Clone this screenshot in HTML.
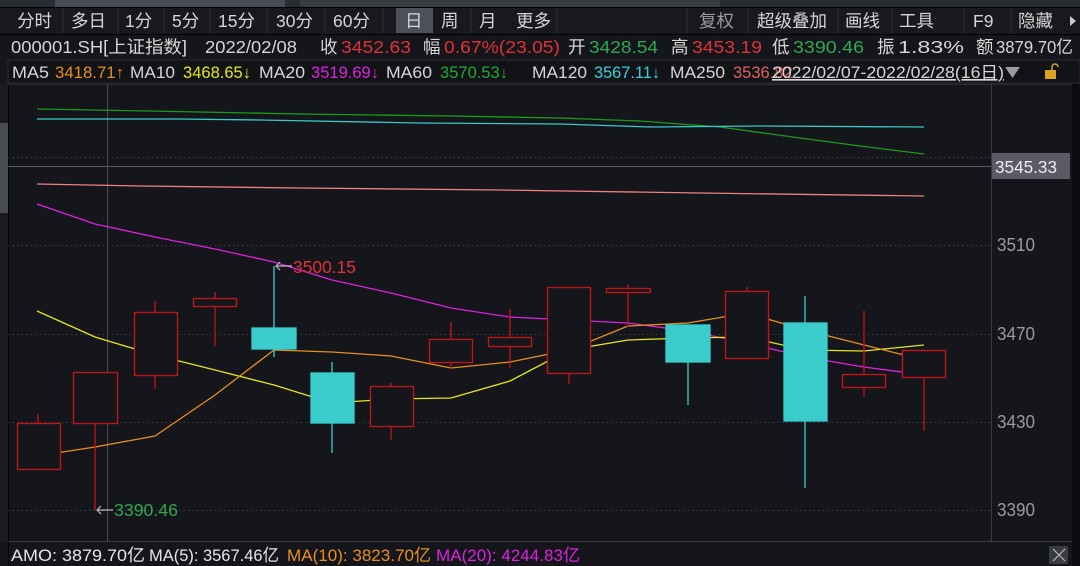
<!DOCTYPE html>
<html><head><meta charset="utf-8"><style>
*{margin:0;padding:0;box-sizing:border-box}
body{width:1080px;height:566px;background:#14161b;overflow:hidden;position:relative;font-family:"Liberation Sans","Noto Sans CJK SC",sans-serif;color:#d0d0d0}
</style></head><body>
<svg width="1080" height="566" style="position:absolute;left:0;top:0" font-family="Liberation Sans, Noto Sans CJK SC, sans-serif">
<rect x="0" y="0" width="1080" height="7" fill="#2a2c33"/>
<rect x="55" y="0" width="230" height="7" fill="#4a4c55"/>
<rect x="300" y="0" width="420" height="7" fill="#3a3c44"/>
<rect x="0" y="7" width="1080" height="27" fill="#17191e"/>
<line x1="0" y1="7.5" x2="1080" y2="7.5" stroke="#000"/>
<rect x="396" y="8" width="37" height="25" fill="#4e5059"/>
<g stroke="#2c2e35">
<line x1="63" y1="8" x2="63" y2="33"/><line x1="118" y1="8" x2="118" y2="33"/><line x1="164" y1="8" x2="164" y2="33"/><line x1="210" y1="8" x2="210" y2="33"/><line x1="267" y1="8" x2="267" y2="33"/><line x1="325" y1="8" x2="325" y2="33"/><line x1="383" y1="8" x2="383" y2="33"/><line x1="471" y1="8" x2="471" y2="33"/><line x1="557" y1="8" x2="557" y2="33"/><line x1="687" y1="8" x2="687" y2="33"/><line x1="748" y1="8" x2="748" y2="33"/><line x1="838" y1="8" x2="838" y2="33"/><line x1="892" y1="8" x2="892" y2="33"/><line x1="964" y1="8" x2="964" y2="33"/><line x1="1011" y1="8" x2="1011" y2="33"/>
</g>
<g font-size="17.5" fill="#d6d6d6">
<text x="17" y="27">分时</text><text x="71" y="27">多日</text><text x="125" y="27">1分</text><text x="172" y="27">5分</text><text x="218" y="27">15分</text><text x="276" y="27">30分</text><text x="333" y="27">60分</text><text x="405" y="27">日</text><text x="441" y="27">周</text><text x="479" y="27">月</text><text x="516" y="27">更多</text>
<text x="699" y="27" fill="#9a9a9a">复权</text><text x="757" y="27">超级叠加</text><text x="845" y="27">画线</text><text x="899" y="27">工具</text><text x="973" y="27">F9</text><text x="1018" y="27">隐藏</text>
</g>
<path d="M1070 16 L1076 21 L1070 26Z" fill="#ccc"/>
<line x1="0" y1="34.5" x2="1080" y2="34.5" stroke="#000"/>
<g font-size="17.5">
<text x="11" y="53" fill="#d6d6d6" textLength="176" lengthAdjust="spacingAndGlyphs">000001.SH[上证指数]</text>
<text x="205" y="53" fill="#d6d6d6" textLength="92" lengthAdjust="spacingAndGlyphs">2022/02/08</text>
<text x="320" y="53" fill="#d6d6d6">收</text><text x="341" y="53" fill="#e03236" textLength="70" lengthAdjust="spacingAndGlyphs">3452.63</text>
<text x="423" y="53" fill="#d6d6d6">幅</text><text x="444" y="53" fill="#e03236" textLength="116" lengthAdjust="spacingAndGlyphs">0.67%(23.05)</text>
<text x="568" y="53" fill="#d6d6d6">开</text><text x="589" y="53" fill="#2fa84f" textLength="69" lengthAdjust="spacingAndGlyphs">3428.54</text>
<text x="671" y="53" fill="#d6d6d6">高</text><text x="692" y="53" fill="#e03236" textLength="70" lengthAdjust="spacingAndGlyphs">3453.19</text>
<text x="772" y="53" fill="#d6d6d6">低</text><text x="793" y="53" fill="#2fa84f" textLength="71" lengthAdjust="spacingAndGlyphs">3390.46</text>
<text x="877" y="53" fill="#d6d6d6">振</text><text x="898" y="53" fill="#d6d6d6" textLength="66" lengthAdjust="spacingAndGlyphs">1.83%</text>
<text x="976" y="53" fill="#d6d6d6">额</text><text x="996" y="53" fill="#d6d6d6" textLength="77" lengthAdjust="spacingAndGlyphs">3879.70亿</text>
</g>
<rect x="8" y="60" width="1072" height="23" fill="#111317" stroke="#2c2e35"/>
<g font-size="16.5">
<text x="12" y="78" fill="#d6d6d6" textLength="37" lengthAdjust="spacingAndGlyphs">MA5</text><text x="55" y="78" fill="#e8901a" textLength="69" lengthAdjust="spacingAndGlyphs">3418.71↑</text>
<text x="130" y="78" fill="#d6d6d6" textLength="45" lengthAdjust="spacingAndGlyphs">MA10</text><text x="183" y="78" fill="#e6e61a" textLength="68" lengthAdjust="spacingAndGlyphs">3468.65↓</text>
<text x="259" y="78" fill="#d6d6d6" textLength="46" lengthAdjust="spacingAndGlyphs">MA20</text><text x="311" y="78" fill="#e020e0" textLength="68" lengthAdjust="spacingAndGlyphs">3519.69↓</text>
<text x="386" y="78" fill="#d6d6d6" textLength="46" lengthAdjust="spacingAndGlyphs">MA60</text><text x="440" y="78" fill="#22a832" textLength="68" lengthAdjust="spacingAndGlyphs">3570.53↓</text>
<text x="532" y="78" fill="#d6d6d6" textLength="55" lengthAdjust="spacingAndGlyphs">MA120</text><text x="594" y="78" fill="#3ad0d8" textLength="66" lengthAdjust="spacingAndGlyphs">3567.11↓</text>
<text x="670" y="78" fill="#d6d6d6" textLength="55" lengthAdjust="spacingAndGlyphs">MA250</text><text x="733" y="78" fill="#e06060">3536.82</text>
<text x="772" y="78" fill="#d6d6d6" text-decoration="underline" textLength="232" lengthAdjust="spacingAndGlyphs">2022/02/07-2022/02/28(16日)</text>
</g>
<path d="M1005 67 L1020 67 L1012.5 78Z" fill="#9a9a9a"/>
<rect x="1045" y="70" width="11" height="9" fill="#d9a520"/>
<path d="M1052 70 v-3 a3 3 0 0 1 6 0" stroke="#d9a520" stroke-width="1.5" fill="none"/>
<rect x="0" y="84" width="8" height="457" fill="#1a1c21"/>
<rect x="0" y="123" width="8" height="90" fill="#4a4c55"/>
<line x1="8.5" y1="84" x2="8.5" y2="566" stroke="#000"/>
<line x1="8" y1="84.5" x2="1072" y2="84.5" stroke="#2c2e35"/>
<line x1="991.5" y1="84" x2="991.5" y2="541" stroke="#3a3c44"/>
<line x1="8" y1="541.5" x2="1072" y2="541.5" stroke="#3a3c44"/>
<rect x="1072" y="84" width="8" height="482" fill="#0c0d10"/>
<g stroke="#3a3c44" stroke-dasharray="1.5,3">
<line x1="8" y1="157.5" x2="991" y2="157.5"/><line x1="8" y1="245.5" x2="991" y2="245.5"/><line x1="8" y1="334.5" x2="991" y2="334.5"/><line x1="8" y1="422.5" x2="991" y2="422.5"/><line x1="8" y1="510.5" x2="991" y2="510.5"/>
</g>
<g font-size="18" fill="#9a9a9a">
<text x="997" y="251" textLength="38" lengthAdjust="spacingAndGlyphs">3510</text><text x="997" y="340" textLength="38" lengthAdjust="spacingAndGlyphs">3470</text><text x="997" y="428" textLength="38" lengthAdjust="spacingAndGlyphs">3430</text><text x="997" y="516" textLength="38" lengthAdjust="spacingAndGlyphs">3390</text>
</g>
<line x1="8" y1="166.5" x2="991" y2="166.5" stroke="#5a5a60"/>
<line x1="107.5" y1="84" x2="107.5" y2="541" stroke="#4a4a50"/>
<rect x="992" y="153" width="78" height="26" fill="#5a5b66"/>
<text x="995" y="173" font-size="17.5" fill="#ececec" textLength="62" lengthAdjust="spacingAndGlyphs">3545.33</text>
<g fill="none" stroke-width="1.3">
<polyline stroke="#1c9a1c" points="37,109 150,111 300,114 450,116 560,118 640,121 720,127 800,138 860,146 924,154"/>
<polyline stroke="#3ac8c8" points="37,119 180,119 260,120 420,123 560,124 650,127 760,126 924,127"/>
<polyline stroke="#f08080" points="37,184 140,186 300,188 500,190 700,193 924,196"/>
<polyline stroke="#e020e0" points="37,204 95,224 155,237 215,249 274,262 332,280 391,293 451,308 510,317 569,320 628,323 688,331 747,343 805,357 864,367 924,375"/>
<polyline stroke="#e6e61a" points="37,311 95,337 155,355 215,370 274,385 332,403 391,399 451,398 510,381 569,350 628,340 688,338 747,337 805,350 864,351 924,345"/>
<polyline stroke="#e8901a" points="37,456 95,447 155,436 215,395 274,350 332,352 391,356 451,368 510,362 569,350 628,326 688,323 747,313 805,330 864,345 924,360"/>
</g>
<g stroke="#c81418" stroke-width="1.3" fill="#14161b">
<line x1="38" y1="414" x2="38" y2="469"/><rect x="17.5" y="423.5" width="43" height="46"/>
<line x1="95" y1="372" x2="95" y2="510"/><rect x="73.5" y="372.5" width="44" height="51"/>
<line x1="155" y1="301" x2="155" y2="389"/><rect x="134.5" y="312.5" width="43" height="63"/>
<line x1="215" y1="292" x2="215" y2="346"/><rect x="193.5" y="298.5" width="43" height="8"/>
<line x1="391" y1="383" x2="391" y2="440"/><rect x="370.5" y="386.5" width="43" height="40"/>
<line x1="451" y1="322" x2="451" y2="369"/><rect x="429.5" y="339.5" width="43" height="23"/>
<line x1="510" y1="309" x2="510" y2="368"/><rect x="488.5" y="337.5" width="43" height="9"/>
<line x1="569" y1="373" x2="569" y2="384"/><rect x="547.5" y="287.5" width="43" height="86"/>
<line x1="628" y1="284" x2="628" y2="327"/><rect x="606.5" y="288.5" width="44" height="4"/>
<line x1="747" y1="287" x2="747" y2="359"/><rect x="725.5" y="291.5" width="43" height="67"/>
<line x1="864" y1="311" x2="864" y2="397"/><rect x="842.5" y="374.5" width="43" height="13"/>
<line x1="924" y1="377" x2="924" y2="431"/><rect x="902.5" y="350.5" width="43" height="27"/>
</g>
<g fill="#3bcccc" stroke="#3bcccc" stroke-width="1.3">
<line x1="274" y1="266" x2="274" y2="357"/><rect x="252" y="328" width="44" height="21"/>
<line x1="332" y1="362" x2="332" y2="453"/><rect x="311" y="373" width="43" height="50"/>
<line x1="688" y1="325" x2="688" y2="405"/><rect x="666" y="325" width="44" height="37"/>
<line x1="805" y1="296" x2="805" y2="488"/><rect x="784" y="323" width="43" height="98"/>
</g>
<g stroke="#bbb" fill="none" stroke-width="1.2">
<path d="M276 266 H292 M280 262 L276 266 L280 270"/>
<path d="M97 510 H113 M101 506 L97 510 L101 514"/>
</g>
<text x="293" y="273" font-size="17.5" fill="#e03236" textLength="63" lengthAdjust="spacingAndGlyphs">3500.15</text>
<text x="114" y="516" font-size="17.5" fill="#2fa84f" textLength="64" lengthAdjust="spacingAndGlyphs">3390.46</text>
<g font-size="17">
<text x="11" y="561" fill="#e6e6e6" textLength="134" lengthAdjust="spacingAndGlyphs">AMO: 3879.70亿</text>
<text x="149" y="561" fill="#e6e6e6" textLength="130" lengthAdjust="spacingAndGlyphs">MA(5): 3567.46亿</text>
<text x="287" y="561" fill="#e8901a" textLength="144" lengthAdjust="spacingAndGlyphs">MA(10): 3823.70亿</text>
<text x="436" y="561" fill="#e020e0" textLength="144" lengthAdjust="spacingAndGlyphs">MA(20): 4244.83亿</text>
</g>
<rect x="1049" y="546" width="19" height="18" fill="#3a3c44"/>
<path d="M1053 549 L1065 561 M1065 549 L1053 561" stroke="#bbb" stroke-width="1.2"/>
</svg>
</body></html>
